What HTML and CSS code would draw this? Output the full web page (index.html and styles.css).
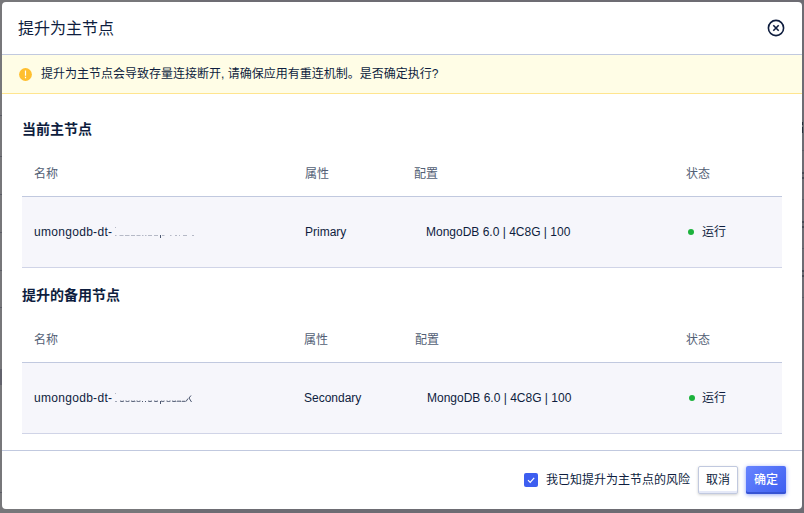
FILE: index.html
```html
<!DOCTYPE html>
<html lang="zh-CN">
<head>
<meta charset="utf-8">
<title>提升为主节点</title>
<link rel="stylesheet" href="styles.css">
</head>
<body>
<svg class="backdrop" width="804" height="513" viewBox="0 0 804 513">
  <path d="M0 115.500h2M0 156.500h2M0 194.500h2M0 232.500h2M0 270.500h2M0 307.500h2M0 492.500h2M802 150.500h2M802 199.500h2M802 248.500h2M802 297.500h2" stroke="#5c5d66"/>
  <path d="M0 369h2v16H0z" fill="#62626c"/>
  <path d="M802.500 122v3M802.500 127v6M804 173h-2M804 178h-2M804 222h-2M804 227h-2M804 271h-2M804 276h-2" stroke="#272b38"/>
</svg>
<main class="modal">
  <header class="modal-header">
    <h1>提升为主节点</h1>
    <svg class="close" viewBox="0 0 18 18" width="18" height="18"><circle cx="9" cy="9" r="7.6"/><path d="M6.300 6.300l5.400 5.400M11.700 6.300l-5.400 5.400"/></svg>
  </header>
  <div class="alert">
    <svg width="13" height="13" viewBox="0 0 13 13"><circle cx="6.5" cy="6.5" r="6.4" fill="#ffbf2f"/><path d="M6.500 2.500v5.200M6.500 8.800v1.500" stroke="#fff" stroke-width="1.200"/></svg>
    <span>提升为主节点会导致存量连接断开, 请确保应用有重连机制。是否确定执行?</span>
  </div>
  <div class="modal-body">
    <section class="primary">
      <h2>当前主节点</h2>
      <div class="row head"><span>名称</span><span>属性</span><span>配置</span><span>状态</span></div>
      <div class="row data">
        <span class="name"><span class="id">umongodb-dt-</span><svg class="mask" width="84" height="14" viewBox="0 0 84 14"><path class="faint" d="M2 2.500h1M2 10.500h1.500M6.500 10.500h4M12 10.500h4.500M18 10.500h4M23.500 10.500h4M29 10.500h1.500M32 10.500h1.500M35 10.500h4M41 10.500h4M49 10.500h2.500M57 10.500h1.500M62 10.500h2M66 10.500h1M70 10.500h4M79 10.500h2"/><path class="dark" d="M47.500 10v3"/></svg></span>
        <span>Primary</span><span class="config">MongoDB 6.0 | 4C8G | 100</span>
        <span class="status"><i class="dot"></i>运行</span>
      </div>
    </section>
    <section class="standby">
      <h2>提升的备用节点</h2>
      <div class="row head"><span>名称</span><span>属性</span><span>配置</span><span>状态</span></div>
      <div class="row data">
        <span class="name"><span class="id">umongodb-dt-</span><svg class="mask" width="84" height="14" viewBox="0 0 84 14"><path class="faint" d="M2 2.500h1"/><path class="dark" d="M2.500 10.500h1M7 10q2 1 4 0M12.500 10q2 1 4 0M18 10q2 1 4 0v.6M23.500 10q2 1 4 0M29 10.500h1M32 10.500h1M35 10q2 1 4 0M41 10q2 1 4 0M47.500 10v3M48 10q2 1 3.500 0M53.500 10q2 1 4 0M59 10q2 1 4 0v.6M64 10.200h4v.6M69 10.300h3.500M73 10.500l2-3M78 4.500l-2 2.500 2.500 4"/></svg></span>
        <span>Secondary</span><span class="config">MongoDB 6.0 | 4C8G | 100</span>
        <span class="status"><i class="dot"></i>运行</span>
      </div>
    </section>
  </div>
  <footer>
    <label><span class="check"><svg width="14" height="14" viewBox="0 0 14 14"><path d="M4 7.100l2.200 2.200 4-4.500"/></svg></span>我已知提升为主节点的风险</label>
    <button class="cancel">取消</button>
    <button class="confirm">确定</button>
  </footer>
</main>
</body>
</html>
```
FILE: styles.css
```css
* { box-sizing: border-box; }
body {
  margin: 0;
  width: 804px;
  height: 513px;
  padding: 2px;
  overflow: hidden;
  background: linear-gradient(90deg, #77777a 180px, #6d6c73 180px);
  font: 12px/18px "Liberation Sans", "Noto Sans CJK SC", sans-serif;
  color: #0e1d3e;
}
.backdrop { position: absolute; top: 0; left: 0; fill: none; }
.modal {
  position: relative;
  width: 800px;
  height: 507px;
  display: flex;
  flex-direction: column;
  background: #fff;
  border-radius: 4px;
}
.modal-header {
  height: 53px;
  padding: 0 17px 0 16px;
  display: flex;
  align-items: center;
  justify-content: space-between;
  border-bottom: 1px solid #c1c9df;
}
h1 { margin: 0; padding-top: 2px; font-size: 16px; font-weight: 400; line-height: 24px; }
.close { fill: none; stroke: #0e1d3e; stroke-width: 1.6; }
.alert {
  height: 39px;
  padding: 0 17px;
  display: flex;
  align-items: center;
  gap: 9px;
  background: #fffde6;
  border-bottom: 1px solid #ffe58f;
}
.modal-body { flex: 1; min-height: 0; padding: 25px 20px 0; }
section { height: 166px; }
h2 { margin: 0; font-size: 14px; line-height: 20px; font-weight: 700; }
.row { display: grid; grid-template-columns: 271px 109px 272px 1fr; align-items: center; padding-left: 12px; }
.standby .row { grid-template-columns: 270px 111px 271px 1fr; }
.head { height: 48px; margin-top: 10px; padding-top: 3px; color: #526075; border-bottom: 1px solid #c1c9df; }
.data { height: 71px; background: #f6f6fb; border-bottom: 1px solid #d0d4e7; }
.name { display: flex; align-items: center; }
.id { letter-spacing: .3px; }
.mask { fill: none; margin-left: 1px; }
.faint { stroke: #b5b9c6; }
.dark { stroke: #4b566f; }
.config { padding-left: 12px; }
.status { display: flex; align-items: center; padding-left: 2px; gap: 8px; }
.standby .status { padding-left: 3px; gap: 7px; }
.dot { width: 6px; height: 6px; border-radius: 50%; background: #1cb23c; }
footer {
  height: 59px;
  padding: 0 16px;
  border-top: 1px solid #c1c9df;
  display: flex;
  align-items: center;
  justify-content: flex-end;
  gap: 8px;
}
label { display: flex; align-items: center; gap: 8px; }
.check { width: 14px; height: 14px; border-radius: 2px; background: #3d5ef0; }
.check svg { display: block; fill: none; stroke: #fff; stroke-width: 1.2; }
button {
  width: 40px;
  height: 28px;
  padding: 0;
  border: 0;
  border-radius: 2px;
  font: inherit;
  color: #0e1d3e;
}
.cancel { background: #fff; border: 1px solid #c1c9df; box-shadow: inset 0 -2px #e5e9f8, 0 1px 3px #00000030; }
.confirm { color: #fff; font-weight: 500; background: linear-gradient(135deg, #6784ff, #3d5ef0); box-shadow: inset 0 -2px #3653d4, 0 1px 4px #3d5ef090; }
```
